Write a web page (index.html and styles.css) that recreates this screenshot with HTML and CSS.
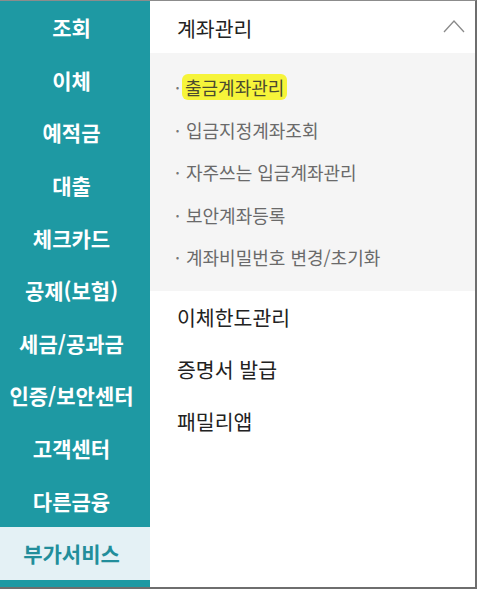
FILE: index.html
```html
<!DOCTYPE html>
<html lang="ko">
<head>
<meta charset="utf-8">
<link rel="stylesheet" href="styles.css">
</head>
<body>
<div class="frame">
  <nav class="side">
    <div class="side-item">조회</div>
    <div class="side-item">이체</div>
    <div class="side-item">예적금</div>
    <div class="side-item">대출</div>
    <div class="side-item">체크카드</div>
    <div class="side-item">공제(보험)</div>
    <div class="side-item">세금/공과금</div>
    <div class="side-item">인증/보안센터</div>
    <div class="side-item">고객센터</div>
    <div class="side-item">다른금융</div>
    <div class="side-item active">부가서비스</div>
  </nav>
  <main class="panel">
    <div class="head">
      <span>계좌관리</span>
      <svg class="chev" width="22" height="14" viewBox="0 0 22 14"><path d="M1 13 L11 2 L21 13" fill="none" stroke="#8a8a8a" stroke-width="1.3"/></svg>
    </div>
    <ul class="sub">
      <li><span class="dot">·</span><span class="mark">출금계좌관리</span></li>
      <li><span class="dot">·</span><span>입금지정계좌조회</span></li>
      <li><span class="dot">·</span><span>자주쓰는 입금계좌관리</span></li>
      <li><span class="dot">·</span><span>보안계좌등록</span></li>
      <li><span class="dot">·</span><span>계좌비밀번호 변경/초기화</span></li>
    </ul>
    <div class="row">이체한도관리</div>
    <div class="row">증명서 발급</div>
    <div class="row">패밀리앱</div>
  </main>
</div>
</body>
</html>
```
FILE: styles.css
```css
* { box-sizing: border-box; }
html, body { margin: 0; padding: 0; background: #fff; }
body {
  font-family: "Noto Sans CJK KR", "Noto Sans", sans-serif;
}
.frame {
  width: 477px;
  height: 589px;
  display: flex;
  border-top: 1px solid #8c8c8c;
  border-right: 2px solid #6e6e6e;
  border-bottom: 2px solid #6e6e6e;
  overflow: hidden;
}
.side {
  width: 150px;
  flex: none;
  background: #1e99a3;
  display: flex;
  flex-direction: column;
}
.side-item {
  height: 52.6px;
  display: flex;
  align-items: center;
  justify-content: center;
  padding-right: 7px;
  color: #fff;
  font-weight: 700;
  font-size: 21px;
  white-space: nowrap;
}
.side-item.active {
  background: #e4f1f5;
  color: #228e9b;
}
.panel {
  flex: 1;
  display: flex;
  flex-direction: column;
}
.head {
  height: 52px;
  display: flex;
  align-items: center;
  justify-content: space-between;
  padding: 2px 10px 0 27px;
  font-size: 20.5px;
  color: #222;
}
.chev { margin-top: -4px; }
.sub {
  list-style: none;
  margin: 0;
  padding: 13px 0 12px 25px;
  background: #f5f5f5;
}
.sub li {
  height: 42.5px;
  display: flex;
  align-items: center;
  font-size: 18px;
  color: #6a6a6a;
  white-space: nowrap;
}
.dot {
  width: 11px;
  color: #777;
}
.mark {
  background: #f6f43a;
  color: #4a4a30;
  border-radius: 6px;
  padding: 0 3px;
  margin-left: -4px;
}
.row {
  height: 52px;
  display: flex;
  align-items: center;
  padding-left: 27px;
  font-size: 20.5px;
  color: #222;
}
```
